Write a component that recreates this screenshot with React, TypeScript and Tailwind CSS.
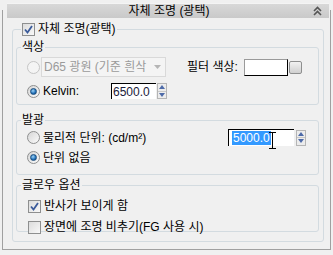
import React from "react";

const font = { fontFamily: '"Liberation Sans", "Noto Sans CJK KR", sans-serif' };

function Radio({ checked, disabled }: { checked?: boolean; disabled?: boolean }) {
  return (
    <span
      className={`flex h-[13px] w-[13px] shrink-0 items-center justify-center rounded-full border ${
        disabled ? "border-[#c5c5c5] bg-[#f4f4f4]" : "border-[#8e8f8f] bg-gradient-to-br from-[#d6d6d6] to-[#fbfbfb]"
      }`}
    >
      {checked && (
        <span className="h-[7px] w-[7px] rounded-full border border-[#1c4e7e] bg-[radial-gradient(circle_at_40%_35%,#9fd4f7,#1f6fb8_60%,#0d3f77)]" />
      )}
    </span>
  );
}

function Check({ checked, disabled }: { checked?: boolean; disabled?: boolean }) {
  return (
    <span
      className={`flex h-[13px] w-[13px] shrink-0 items-center justify-center border ${
        disabled ? "border-[#bcbcbc]" : "border-[#8e8f8f]"
      } bg-gradient-to-br from-[#dcdcdc] to-[#f8f8f8]`}
    >
      {checked && (
        <svg width="9" height="9" viewBox="0 0 9 9">
          <path d="M1 4.5 L3.5 7.5 L8 1" stroke="#3a5a9a" strokeWidth="1.8" fill="none" />
        </svg>
      )}
    </span>
  );
}

function Spinner() {
  return (
    <span className="flex h-[16px] w-[10px] shrink-0 flex-col border border-[#b5b5b5] bg-[#ececec]">
      <span className="flex flex-1 items-center justify-center border-b border-[#c8c8c8]">
        <svg width="6" height="4" viewBox="0 0 6 4">
          <path d="M0 4 L3 0 L6 4 Z" fill="#4d6aa8" />
        </svg>
      </span>
      <span className="flex flex-1 items-center justify-center">
        <svg width="6" height="4" viewBox="0 0 6 4">
          <path d="M0 0 L3 4 L6 0 Z" fill="#4d6aa8" />
        </svg>
      </span>
    </span>
  );
}

export default function App() {
  return (
    <div className="h-[255px] w-[333px] overflow-hidden bg-[#f0f0f0] text-[12px] leading-[14px] text-black" style={font}>
      <div className="ml-[2px] mt-[10px] flex h-[240px] w-[329px] flex-col border-x border-b border-[#a0a0a0]">
        {/* title bar */}
        <div className="relative -mt-[7px] ml-[4px] flex h-[15px] w-[322px] items-center justify-center border-t border-[#f4f4f4] bg-gradient-to-b from-[#d8d8d8] to-[#c9c9c9]">
          <span className="pl-[2px]">자체 조명 (광택)</span>
          <svg className="absolute right-[7px] top-[2px]" width="9" height="10" viewBox="0 0 9 10">
            <path d="M1 5 L4.5 1.5 L8 5 M1 9 L4.5 5.5 L8 9" stroke="#555" strokeWidth="1.6" fill="none" />
          </svg>
        </div>

        {/* group 1 */}
        <fieldset className="ml-[9px] mt-[4px] h-[220px] w-[312px] rounded-[3px] border border-[#d3dbe0] px-0 pb-0">
          <legend className="ml-[8px] flex items-center gap-[3px] px-[1px]">
            <Check checked />
            <span>자체 조명(광택)</span>
          </legend>

          {/* 색상 */}
          <fieldset className="ml-[3px] mt-[4px] h-[65px] w-[303px] rounded-[3px] border border-[#d3dbe0] p-0">
            <legend className="ml-[4px] px-[1px]">색상</legend>
            <div className="mt-[3px] flex h-[20px] items-center">
              <span className="ml-[10px]">
                <Radio disabled />
              </span>
              <span className="ml-[1px] flex h-[20px] w-[125px] items-center justify-between overflow-hidden border border-[#d9d9d9] bg-[#f4f4f4] pl-[2px] pr-[4px] text-[#9a9a9a]">
                <span className="whitespace-nowrap">D65 광원 (기준 흰삭</span>
                <svg width="7" height="4" viewBox="0 0 7 4">
                  <path d="M0 0 L3.5 4 L7 0 Z" fill="#b5b5b5" />
                </svg>
              </span>
              <span className="ml-[21px] whitespace-nowrap">필터 색상:</span>
              <span className="ml-[6px] h-[17px] w-[44px] border border-[#9a9a9a] border-b-black border-r-black bg-white" />
              <span className="ml-[1px] h-[13px] w-[13px] rounded-[2px] border border-[#8e8f8f] bg-gradient-to-b from-[#f2f2f2] to-[#d0d0d0]" />
            </div>
            <div className="mt-[6px] flex h-[16px] items-center">
              <span className="ml-[10px]">
                <Radio checked />
              </span>
              <span className="ml-[3px] w-[68px]">Kelvin:</span>
              <span className="flex h-[16px] w-[45px] items-center border-l border-t border-black bg-white pl-[1px] text-[#1a1a3a]">
                6500.0
              </span>
              <span className="ml-[1px]">
                <Spinner />
              </span>
            </div>
          </fieldset>

          {/* 발광 */}
          <fieldset className="ml-[3px] mt-[8px] h-[62px] w-[303px] rounded-[3px] border border-[#d3dbe0] p-0">
            <legend className="ml-[4px] px-[1px]">발광</legend>
            <div className="mt-[2px] flex h-[17px] items-center">
              <span className="ml-[10px]">
                <Radio />
              </span>
              <span className="ml-[3px] w-[185px] whitespace-nowrap">물리적 단위: (cd/m²)</span>
              <span className="relative flex h-[17px] w-[66px] items-center border-l border-t border-black bg-white pl-[3px]">
                <span className="bg-[#3399ff] px-[1px] text-white">5000.0</span>
                <svg className="absolute left-[39px] top-[2px]" width="9" height="17" viewBox="0 0 9 17">
                  <path d="M1 0.5 H8 M4.5 0.5 V16.5 M1 16.5 H8" stroke="#000" strokeWidth="1" fill="none" />
                </svg>
              </span>
              <span className="ml-[2px]">
                <Spinner />
              </span>
            </div>
            <div className="mt-[3px] flex h-[17px] items-center">
              <span className="ml-[10px]">
                <Radio checked />
              </span>
              <span className="ml-[3px]">단위 없음</span>
            </div>
          </fieldset>

          {/* 글로우 옵션 */}
          <fieldset className="ml-[3px] mt-[3px] h-[54px] w-[303px] rounded-[3px] border border-[#d3dbe0] p-0">
            <legend className="ml-[4px] px-[1px]">글로우 옵션</legend>
            <div className="mt-[6px] flex h-[16px] items-center">
              <span className="ml-[11px]">
                <Check checked />
              </span>
              <span className="ml-[3px]">반사가 보이게 함</span>
            </div>
            <div className="mt-[5px] flex h-[16px] items-center">
              <span className="ml-[11px]">
                <Check />
              </span>
              <span className="ml-[3px]">장면에 조명 비추기(FG 사용 시)</span>
            </div>
          </fieldset>
        </fieldset>
      </div>
    </div>
  );
}
